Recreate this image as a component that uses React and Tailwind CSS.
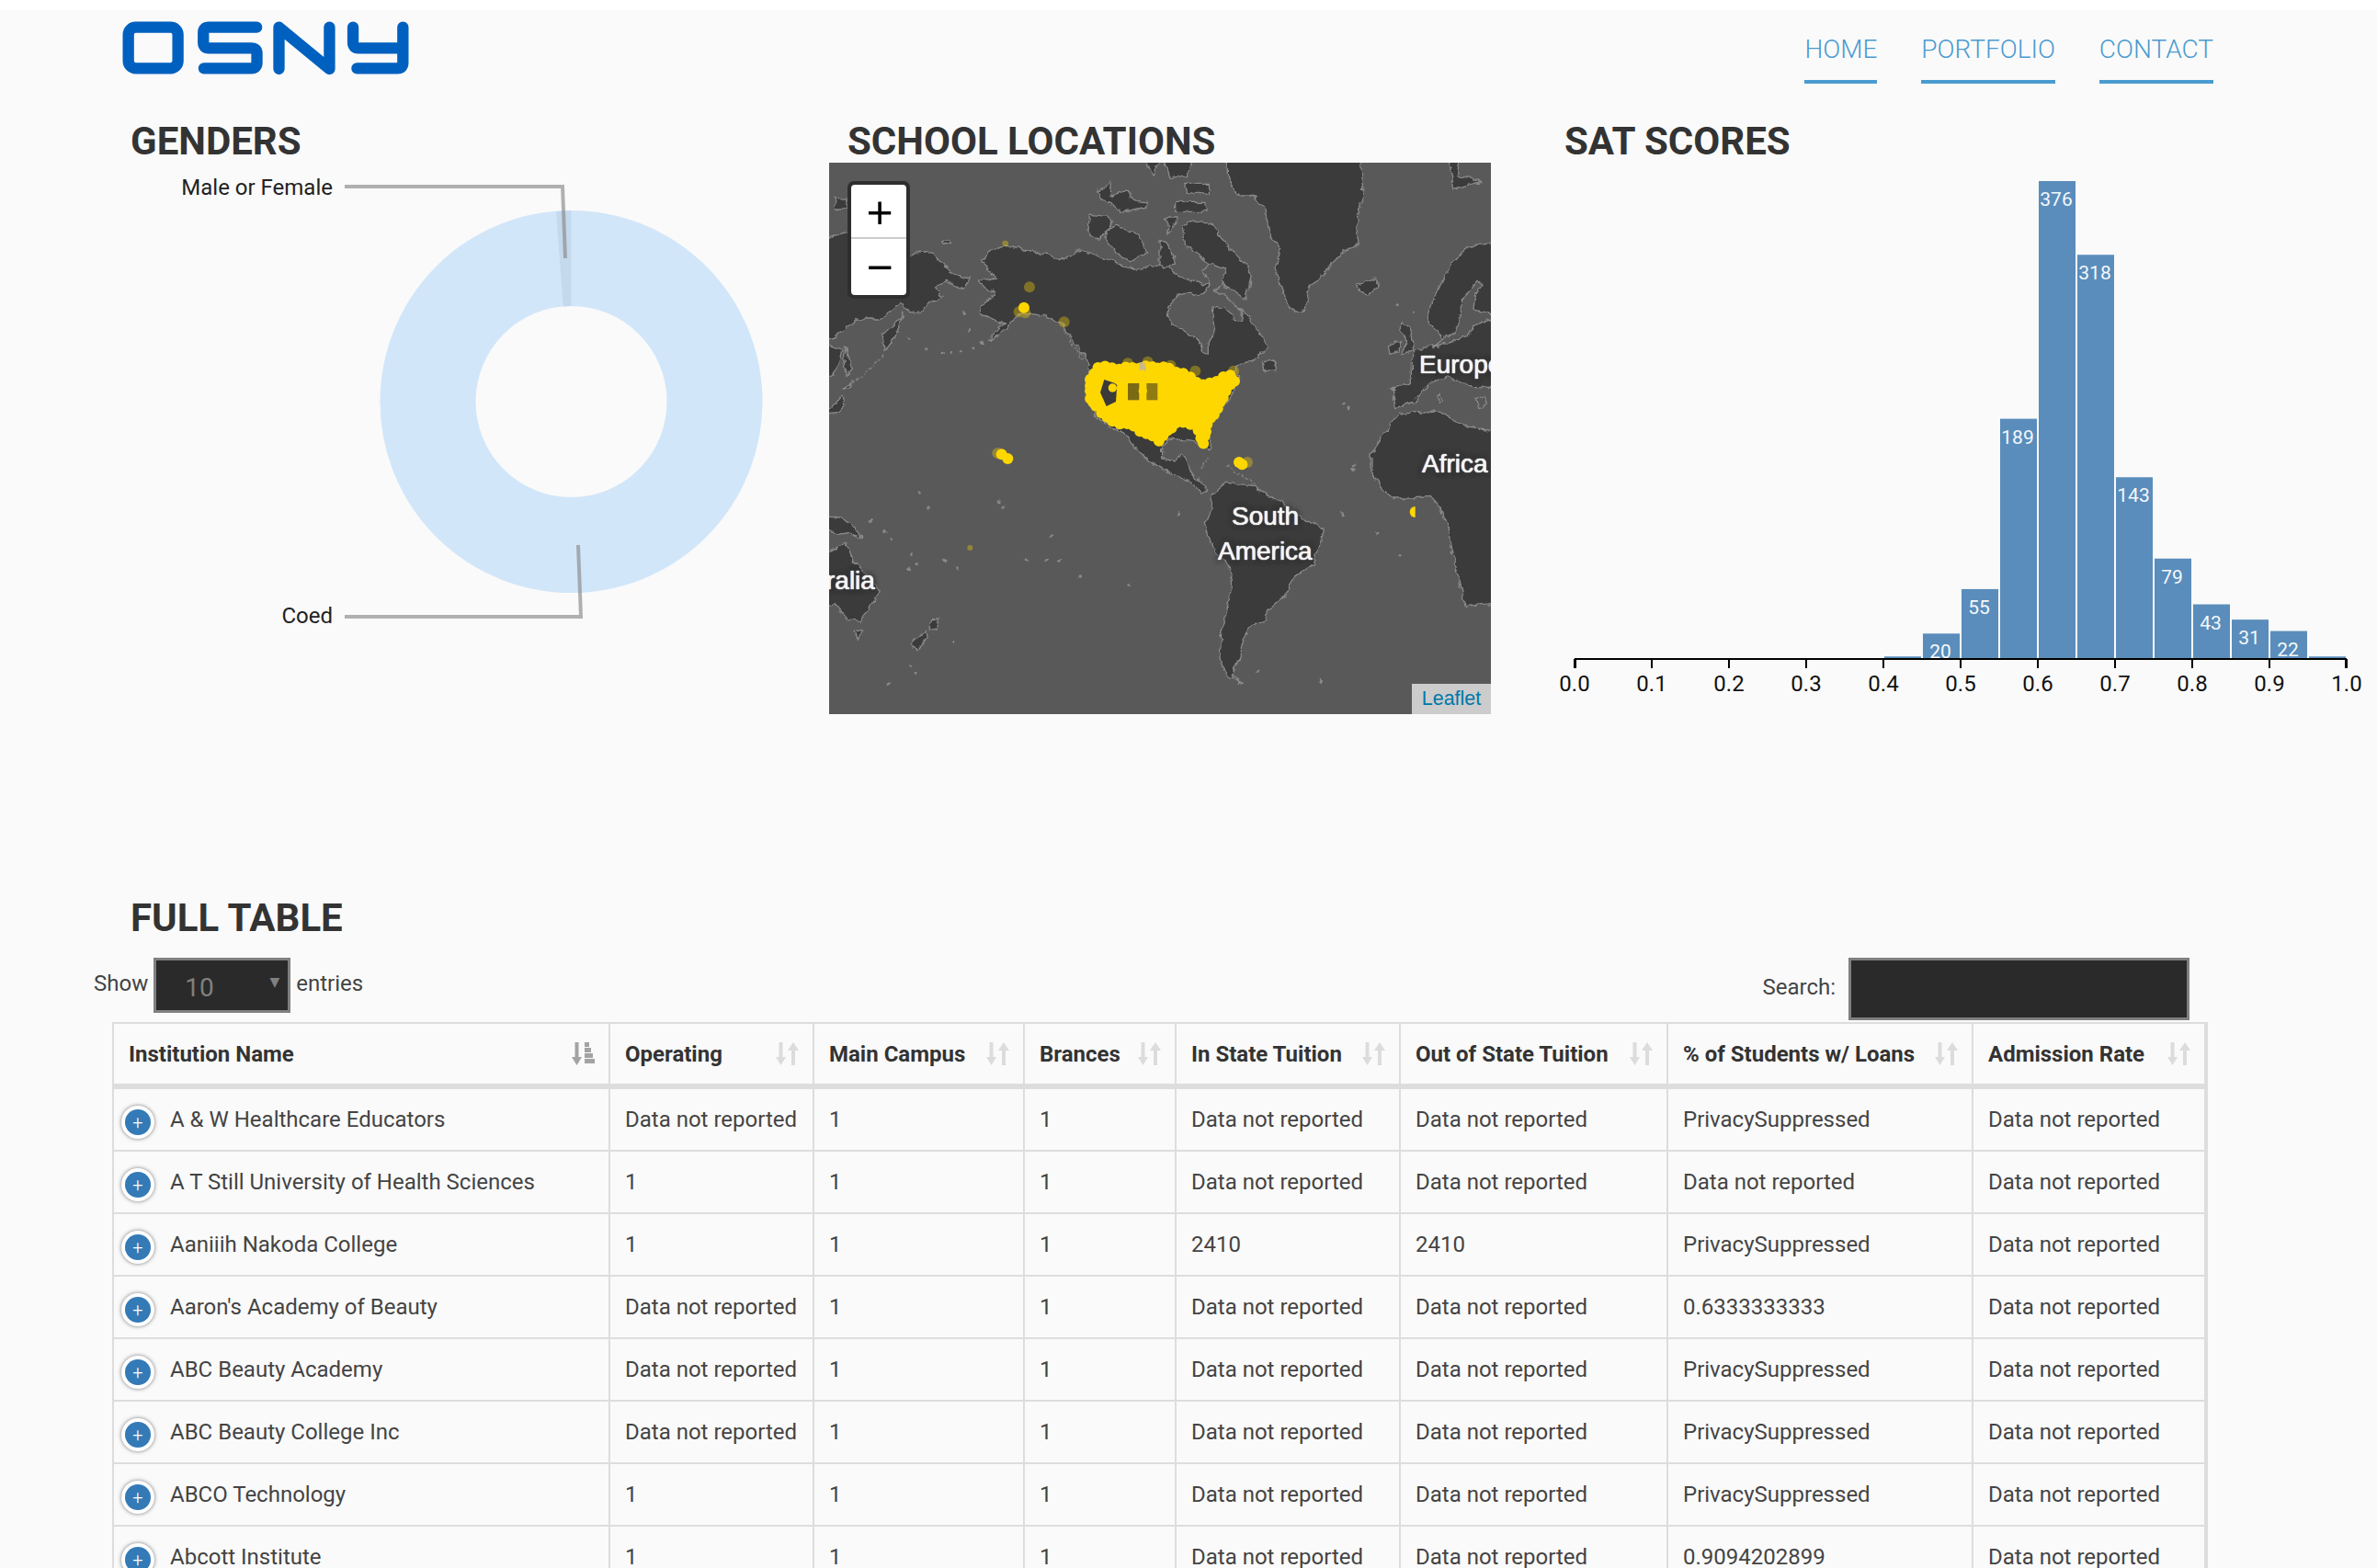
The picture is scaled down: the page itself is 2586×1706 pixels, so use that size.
import React from 'react';

const NAV = ['HOME', 'PORTFOLIO', 'CONTACT'];

const COLS = [
  { label: 'Institution Name', w: 'w-[538px]' },
  { label: 'Operating', w: 'w-[222px]' },
  { label: 'Main Campus', w: 'w-[229px]' },
  { label: 'Brances', w: 'w-[165px]' },
  { label: 'In State Tuition', w: 'w-[244px]' },
  { label: 'Out of State Tuition', w: 'w-[291px]' },
  { label: '% of Students w/ Loans', w: 'w-[332px]' },
  { label: 'Admission Rate', w: 'w-[253px]' },
];

const NR = 'Data not reported';
const PS = 'PrivacySuppressed';
const ROWS = [
  ['A & W Healthcare Educators', NR, '1', '1', NR, NR, PS, NR],
  ['A T Still University of Health Sciences', '1', '1', '1', NR, NR, NR, NR],
  ['Aaniiih Nakoda College', '1', '1', '1', '2410', '2410', PS, NR],
  ["Aaron's Academy of Beauty", NR, '1', '1', NR, NR, '0.6333333333', NR],
  ['ABC Beauty Academy', NR, '1', '1', NR, NR, PS, NR],
  ['ABC Beauty College Inc', NR, '1', '1', NR, NR, PS, NR],
  ['ABCO Technology', '1', '1', '1', NR, NR, PS, NR],
  ['Abcott Institute', '1', '1', '1', NR, NR, '0.9094202899', NR],
];

const BARS = [2, 20, 55, 189, 376, 318, 143, 79, 43, 31, 22, 2];
const TICKS = ['0.0', '0.1', '0.2', '0.3', '0.4', '0.5', '0.6', '0.7', '0.8', '0.9', '1.0'];

function Logo() {
  return (
    <svg viewBox="30 18 955 192" className="w-[318px] h-[64px]">
      <g fill="none" stroke="#0060bf" strokeWidth="37" strokeLinecap="round" strokeLinejoin="round">
        <rect x="59" y="47" width="162" height="134" rx="24" />
        <path d="M478 47 H322 Q304 47 304 65 V97 Q304 115 322 115 H460 Q479 115 479 133 V163 Q479 181 460 181 H306" />
        <path d="M551 183 V47 L716 183 V47" />
        <path d="M793 47 V97 Q793 115 811 115 H956 M956 47 V163 Q956 181 938 181 H806" />
      </g>
    </svg>
  );
}

function Heading({ children }) {
  return <h2 className="h-[49px] pl-[20px] text-[42px] leading-[51px] font-bold text-[#333]">{children}</h2>;
}

function Donut() {
  return (
    <svg width="780" height="600" className="overflow-visible font-['Roboto']">
      <circle cx="499.5" cy="260" r="156" fill="none" stroke="#d2e6f9" strokeWidth="104" />
      <path d="M483 53 L499.5 52 V156 L490.7 156.4 Z" fill="#c5d9ed" />
      <g fill="none" stroke="#888" strokeWidth="4" opacity="0.65">
        <path d="M253 26 H490 L493 104" />
        <path d="M253 494 H510 L507 416" />
      </g>
      <g fontSize="24" fill="#222" textAnchor="end">
        <text x="240" y="35">Male or Female</text>
        <text x="240" y="501">Coed</text>
      </g>
    </svg>
  );
}

function Histogram() {
  return (
    <svg width="904" height="600" className="overflow-visible font-['Roboto']">
      {BARS.map((n, i) => {
        const h = n * 1.383;
        const x = 31 + 336 + i * 42;
        return (
          <g key={i}>
            <rect x={x + 1} y={540 - h} width="40" height={h} fill="#5a8dbb" />
            {n > 2 && (
              <text x={x + 20} y={540 - h + 27} fontSize="21" fill="#f4f8fb" textAnchor="middle">
                {n}
              </text>
            )}
          </g>
        );
      })}
      <path d="M32 550 V540 H870 V550" fill="none" stroke="#000" strokeWidth="2" />
      {TICKS.map((t, i) => (
        <g key={t}>
          <line x1={31 + i * 84} x2={31 + i * 84} y1="540" y2="550" stroke="#000" strokeWidth="2" />
          <text x={31 + i * 84} y="575" fontSize="24" fill="#111" textAnchor="middle">
            {t}
          </text>
        </g>
      ))}
    </svg>
  );
}

// land shapes traced in a 3x frame of the 720x600 map
const LAND = [
  // north + central america
  '575,268 640,285 720,300 755,320 820,285 860,300 920,320 990,350 1080,335 1110,340 1140,370 1180,385 1240,400 1330,470 1360,490 1390,540 1435,600 1420,620 1380,640 1330,665 1315,690 1340,700 1320,750 1280,800 1240,860 1245,900 1240,935 1190,910 1150,905 1110,900 1085,930 1085,965 1130,975 1155,950 1170,985 1195,1030 1225,1050 1235,1070 1215,1080 1180,1040 1130,1020 1090,1000 1040,970 990,920 960,880 935,870 870,830 835,760 850,650 800,590 760,530 700,500 640,490 605,510 560,560 520,580 540,555 575,525 530,510 495,490 500,465 530,440 545,420 510,410 490,385 545,375 530,355 498,325 520,290',
  // south america
  '1250,1080 1295,1045 1390,1055 1410,1075 1480,1110 1550,1165 1615,1195 1600,1240 1580,1310 1510,1360 1490,1410 1430,1460 1425,1490 1380,1505 1360,1540 1345,1580 1345,1610 1320,1660 1315,1670 1350,1700 1295,1670 1275,1620 1280,1540 1290,1500 1310,1400 1315,1330 1260,1270 1225,1180 1245,1130',
  // africa
  '1800,900 1860,820 1980,810 2020,830 2080,860 2180,880 2180,1440 2080,1450 2065,1400 2030,1260 2020,1190 1995,1130 1960,1090 1900,1095 1840,1095 1800,1060 1770,1010 1770,950',
  // europe + russia
  '1955,490 1980,430 2030,330 2090,270 2180,262 2180,735 2100,730 2040,710 2010,700 1960,720 1910,780 1850,800 1835,735 1900,720 1900,650 1915,610 1960,600 2005,590 1990,560 1960,520',
  // greenland
  '1300,-20 1735,-20 1740,60 1745,120 1720,170 1730,260 1680,290 1640,330 1590,390 1570,400 1545,490 1510,480 1480,420 1455,340 1475,280 1440,240 1420,140 1380,105 1330,105 1300,40',
  // iceland, britain, ireland
  '1725,400 1780,375 1795,400 1760,430 1730,420',
  '1870,520 1890,530 1910,610 1870,625 1885,580 1865,555',
  '1825,600 1865,580 1860,615 1830,625',
  // east russia
  '-20,250 60,228 255,310 285,290 340,295 380,340 420,370 460,375 435,415 380,385 350,410 370,440 340,450 290,490 250,480 240,455 165,510 90,510 20,570 -20,580',
  '240,490 230,510 175,560 180,620 215,570 235,515',
  '-20,590 45,610 30,670 -20,710',
  '52,600 70,670 58,700 50,640',
  '-20,825 45,760 50,790 30,812',
  '45,732 75,720 70,735',
  '15,115 60,118 60,150 20,150',
  '368,258 395,250 395,265 372,270',
  // canadian arctic
  '870,100 920,60 915,110 970,90 985,120 1040,130 1030,150 950,160 910,130 885,115',
  '850,170 910,175 925,195 880,255 845,240',
  '905,220 940,205 1010,235 1040,300 980,320 930,290 900,250',
  '1020,-20 1085,-20 1060,40',
  '1090,-20 1190,-20 1170,40 1110,50',
  '1130,130 1230,130 1230,160 1130,160',
  '1160,70 1240,70 1240,100 1170,95',
  '1100,180 1140,180 1110,230',
  '1080,250 1120,290 1130,330 1080,340',
  '1180,190 1250,200 1300,270 1380,360 1360,450 1290,400 1250,350 1210,300 1160,270 1150,210',
  // newfoundland, svalbard
  '1420,650 1455,645 1460,680 1425,680',
  '2020,-20 2060,-20 2050,40 2130,60 2040,85',
  // oceania
  '-20,1280 55,1240 80,1300 110,1330 165,1400 130,1460 100,1495 60,1490 20,1440 -20,1445',
  '80,1525 110,1530 95,1555',
  '270,1570 320,1525 325,1550 285,1590',
  '335,1490 360,1490 345,1525 330,1520',
  '-20,1155 40,1158 80,1190 110,1225 60,1205 30,1215 -20,1190',
];

const WATER = [
  // hudson bay
  '1110,470 1135,430 1180,420 1205,440 1245,405 1220,350 1250,330 1295,345 1280,400 1255,420 1290,430 1330,470 1350,490 1345,520 1320,510 1295,470 1255,470 1250,500 1260,550 1240,580 1240,625 1220,620 1210,580 1160,550 1120,525 1105,500',
  // baltic
  '2115,385 2130,400 2105,440 2100,480 2155,490 2170,510 2100,530 2080,570 2010,590 1970,600 2010,570 2040,560 2065,490 2065,450',
  // med islands / black sea
  '2110,770 2140,760 2150,790 2120,800',
  '1985,760 1995,750 2000,780 1990,785',
];

// outline of the us dots, in edge coordinates
const US_EDGE = [[835, 700], [862, 649], [936, 655], [1053, 649], [1112, 655], [1186, 688], [1230, 720], [1326, 681], [1341, 700], [1311, 740], [1282, 805], [1245, 865], [1232, 937], [1205, 868], [1186, 862], [1135, 860], [1076, 924], [965, 863], [913, 857], [855, 800], [835, 765]];
const US_POINTS = US_EDGE.map(([x, y]) => [1085 + (x - 1085) * 0.93, 780 + (y - 780) * 0.87]);

// dots spaced along the outline so the edge stays lumpy
function edgeDots(points) {
  const dots = [];
  points.forEach(([x, y], i) => {
    const [nx, ny] = points[(i + 1) % points.length];
    const steps = Math.ceil(Math.hypot(nx - x, ny - y) / 26);
    for (let s = 0; s < steps; s++) {
      const wobble = (dots.length % 3) * 3 - 3;
      dots.push([x + ((nx - x) * s) / steps, y + ((ny - y) * s) / steps + wobble]);
    }
  });
  return dots;
}

const SOLID = [[636, 473], [563, 952], [583, 966], [1338, 978], [1348, 985]];
const STRIPES = [[945, 712], [925, 735], [960, 765], [1022, 690], [1024, 745], [1024, 785], [960, 700]];
const FAINT = [[654, 406], [620, 487], [640, 490], [767, 520], [550, 948], [1365, 978], [1115, 662], [1040, 650], [975, 655], [1195, 680], [1320, 680], [860, 720]];
const ISLES = [[260,575],[320,605],[370,622],[400,620],[430,617],[470,605],[500,590],[525,575],[548,568],[440,488],[460,546],[85,110],[75,120],[300,1075],[320,1125],[555,1107],[572,1125],[720,1220],[640,1295],[710,1295],[750,1298],[375,1295],[270,1275],[285,1310],[180,1205],[205,1225],[135,1168],[260,1325],[420,1325],[408,1558],[260,1643],[285,1670],[195,1698],[820,1353],[980,1382],[1710,1000],[1715,990],[1675,1145],[1140,1145],[1400,1660],[1600,1690],[1845,1100],[1840,740],[1855,465],[1905,490],[1840,770],[1680,785],[1695,800],[1790,1208],[1860,1280]];

const LABELS = [
  { text: 'Europe', cls: 'left-[642px] top-[206px]' },
  { text: 'Africa', cls: 'left-[645px] top-[314px]' },
  { text: 'South', cls: 'left-[438px] top-[371px]' },
  { text: 'America', cls: 'left-[423px] top-[409px]' },
  { text: 'ralia', cls: 'left-[-3px] top-[441px]' },
];

function WorldMap() {
  return (
    <div className="relative w-[720px] h-[600px] bg-[#595959] overflow-hidden">
      <svg viewBox="0 0 2160 1800" className="w-[720px] h-[600px]">
        <defs>
          <filter id="rough" x="-5%" y="-5%" width="110%" height="110%" filterUnits="objectBoundingBox">
            <feTurbulence type="fractalNoise" baseFrequency="0.035" numOctaves="3" seed="4" />
            <feDisplacementMap in="SourceGraphic" scale="22" xChannelSelector="R" yChannelSelector="G" />
            <feGaussianBlur stdDeviation="1.5" />
          </filter>
        </defs>
        <g filter="url(#rough)">
          <g fill="#3a3a3a" stroke="#8a8a8a" strokeWidth="4" strokeLinejoin="round">
            {LAND.map((p, i) => (
              <polygon key={i} points={p} />
            ))}
          </g>
          <g fill="#595959" stroke="#8a8a8a" strokeWidth="4" strokeLinejoin="round">
            {WATER.map((p, i) => (
              <polygon key={i} points={p} />
            ))}
          </g>
          <path d="M175 630 L130 680 L60 730 M760 530 L790 590 L830 640 M1215 1000 L1240 960 M1300 990 L1390 1050" fill="none" stroke="#7d7d7d" strokeWidth="6" strokeDasharray="8 6" />
          <g fill="#8a8a8a">
            {ISLES.map(([x, y], i) => (
              <circle key={i} cx={x} cy={y} r="5" />
            ))}
          </g>
        </g>
        <polygon points={US_POINTS.map((p) => p.join(',')).join(' ')} fill="#ffd700" />
        <g fill="#ffd700">
          {edgeDots(US_POINTS).map(([x, y], i) => (
            <circle key={i} cx={x} cy={y} r="18" />
          ))}
        </g>
        <polygon points="898,708 940,722 936,780 905,795 885,750" fill="#3a3a3a" />
        <polygon points="975,720 1012,720 1012,775 975,775" fill="#7b6a14" />
        <polygon points="1036,720 1072,720 1072,775 1036,775" fill="#8f7b12" />
        <polygon points="1012,652 1034,652 1034,700 1014,695" fill="#c9b98a" />
        <g fill="#ffd700">
          {SOLID.map(([x, y], i) => (
            <circle key={i} cx={x} cy={y} r="18" />
          ))}
          {STRIPES.map(([x, y], i) => (
            <circle key={i} cx={x} cy={y} r="14" />
          ))}
          <path d="M1913 1122 A18 18 0 0 0 1913 1158 Z" />
        </g>
        <g fill="#ffd700" opacity="0.35">
          {FAINT.map(([x, y], i) => (
            <circle key={i} cx={x} cy={y} r="18" />
          ))}
          <circle cx="575" cy="264" r="10" />
          <circle cx="460" cy="1257" r="9" />
        </g>
      </svg>
      {LABELS.map((l) => (
        <span
          key={l.text}
          className={`absolute ${l.cls} font-['Liberation_Sans'] text-[28px] leading-[28px] text-[#f4f4f4] whitespace-nowrap [text-shadow:0_0_1px_#ffffff,0_0_1px_#ffffff,0_0_4px_#333333,0_0_6px_#333333,0_0_6px_#333333]`}
        >
          {l.text}
        </span>
      ))}
      <div className="absolute left-[20px] top-[20px] w-[68px] h-[128px] rounded-[7px] bg-[#2e2e2e] p-[4px]">
        <div className="flex flex-col w-[60px] h-[120px] rounded-[4px] bg-white text-black font-['Liberation_Sans'] text-[50px] leading-none">
          <span className="flex items-center justify-center h-[59px] pl-[2px] pt-[2px] border-b-2 border-[#ccc]">+</span>
          <span className="flex items-center justify-center h-[61px] pl-[2px]">−</span>
        </div>
      </div>
      <div className="absolute right-0 bottom-0 w-[86px] h-[33px] bg-[#cccccc] text-[#0078a8] font-['Liberation_Sans'] text-[21.5px] leading-[33px] text-center">
        Leaflet
      </div>
    </div>
  );
}

function SortIcon({ active }) {
  if (active) {
    return (
      <svg width="25" height="25" viewBox="0 0 25 25" fill="#a3a3a3" className="shrink-0">
        <path d="M3.5 0 H7.5 V16 H11 L5.5 25 L0 16 H3.5 Z" />
        <rect x="14" y="0" width="5" height="5" />
        <rect x="14" y="6" width="7" height="5" />
        <rect x="14" y="12" width="9" height="5" />
        <rect x="14" y="18" width="11" height="5" />
      </svg>
    );
  }
  return (
    <svg width="25" height="25" viewBox="0 0 25 25" fill="#dcdcdc" className="shrink-0">
      <path d="M3.5 0 H7.5 V16 H11 L5.5 25 L0 16 H3.5 Z" />
      <path d="M19 0 L25 9 H21 V25 H17 V9 H13 Z" />
    </svg>
  );
}

function ExpandButton() {
  return (
    <span className="flex items-center justify-center shrink-0 mt-[6px] w-[36px] h-[36px] rounded-full bg-white shadow-[0_0_4px_#777]">
      <span className="flex items-center justify-center w-[28px] h-[28px] rounded-full bg-[#337ab7] text-white text-[20px] font-light leading-none">+</span>
    </span>
  );
}

function DataTable() {
  return (
    <table className="table-fixed border-separate border-spacing-0 w-[2280px] border-t-2 border-l-2 border-r-[4px] border-[#ddd] text-[24px]">
      <colgroup>
        {COLS.map((c) => (
          <col key={c.label} className={c.w} />
        ))}
      </colgroup>
      <thead>
        <tr>
          {COLS.map((c, i) => (
            <th key={c.label} className={`h-[71px] border-b-[6px] border-[#ddd] text-left font-bold text-[#333] ${i > 0 ? 'border-l-2' : ''}`}>
              <div className="flex items-center justify-between pl-[16px] pr-[15px]">
                <span className="whitespace-nowrap">{c.label}</span>
                <SortIcon active={i === 0} />
              </div>
            </th>
          ))}
        </tr>
      </thead>
      <tbody>
        {ROWS.map((row, r) => (
          <tr key={r}>
            {row.map((cell, i) =>
              i === 0 ? (
                <td key={i} className="h-[68px] border-b-2 border-[#ddd] text-[#444]">
                  <div className="flex items-center gap-[17px] pl-[8px]">
                    <ExpandButton />
                    <span className="whitespace-nowrap">{cell}</span>
                  </div>
                </td>
              ) : (
                <td key={i} className="h-[68px] border-b-2 border-l-2 border-[#ddd] pl-[16px] text-[#444] whitespace-nowrap">
                  {cell}
                </td>
              )
            )}
          </tr>
        ))}
      </tbody>
    </table>
  );
}

export default function App() {
  return (
    <div className="h-[1706px] overflow-hidden bg-[#fafafa] font-['Roboto'] text-[#333]">
      <div className="h-[11px] bg-white" />

      <header className="flex h-[117px] pl-[130px] pr-[178px]">
        <div className="pt-[9px]">
          <Logo />
        </div>
        <nav className="ml-auto flex gap-[48px] pt-[21px] items-start">
          {NAV.map((item) => (
            <a key={item} className="h-[59px] border-b-[4px] border-[#4a9bd0] text-[28px] leading-[44px] font-light text-[#4a9bd0]">
              {item}
            </a>
          ))}
        </nav>
      </header>

      <section className="grid grid-cols-[780px_780px_904px] pl-[122px]">
        <div>
          <Heading>GENDERS</Heading>
          <Donut />
        </div>
        <div>
          <Heading>SCHOOL LOCATIONS</Heading>
          <WorldMap />
        </div>
        <div>
          <Heading>SAT SCORES</Heading>
          <Histogram />
        </div>
      </section>

      <section className="mt-[196px] pl-[122px]">
        <Heading>FULL TABLE</Heading>
        <div className="flex justify-between w-[2280px] h-[90px] pt-[20px] text-[24px] text-[#444]">
          <div className="flex items-start gap-[6px] -ml-[20px]">
            <span className="leading-[56px]">Show</span>
            <div className="relative w-[149px] h-[60px] bg-[#2a2a2a] border-[3px] border-[#808080] text-[#808080]">
              <span className="absolute left-[31px] top-[8px] text-[28px] leading-[44px]">10</span>
              <span className="absolute right-[9px] top-[13px] text-[14px] leading-[20px] font-['DejaVu_Sans']">▼</span>
            </div>
            <span className="leading-[56px]">entries</span>
          </div>
          <div className="flex items-start gap-[14px] pr-[20px]">
            <span className="leading-[64px]">Search:</span>
            <div className="w-[371px] h-[68px] bg-[#2a2a2a] border-[3px] border-[#808080]" />
          </div>
        </div>
        <DataTable />
      </section>
    </div>
  );
}
